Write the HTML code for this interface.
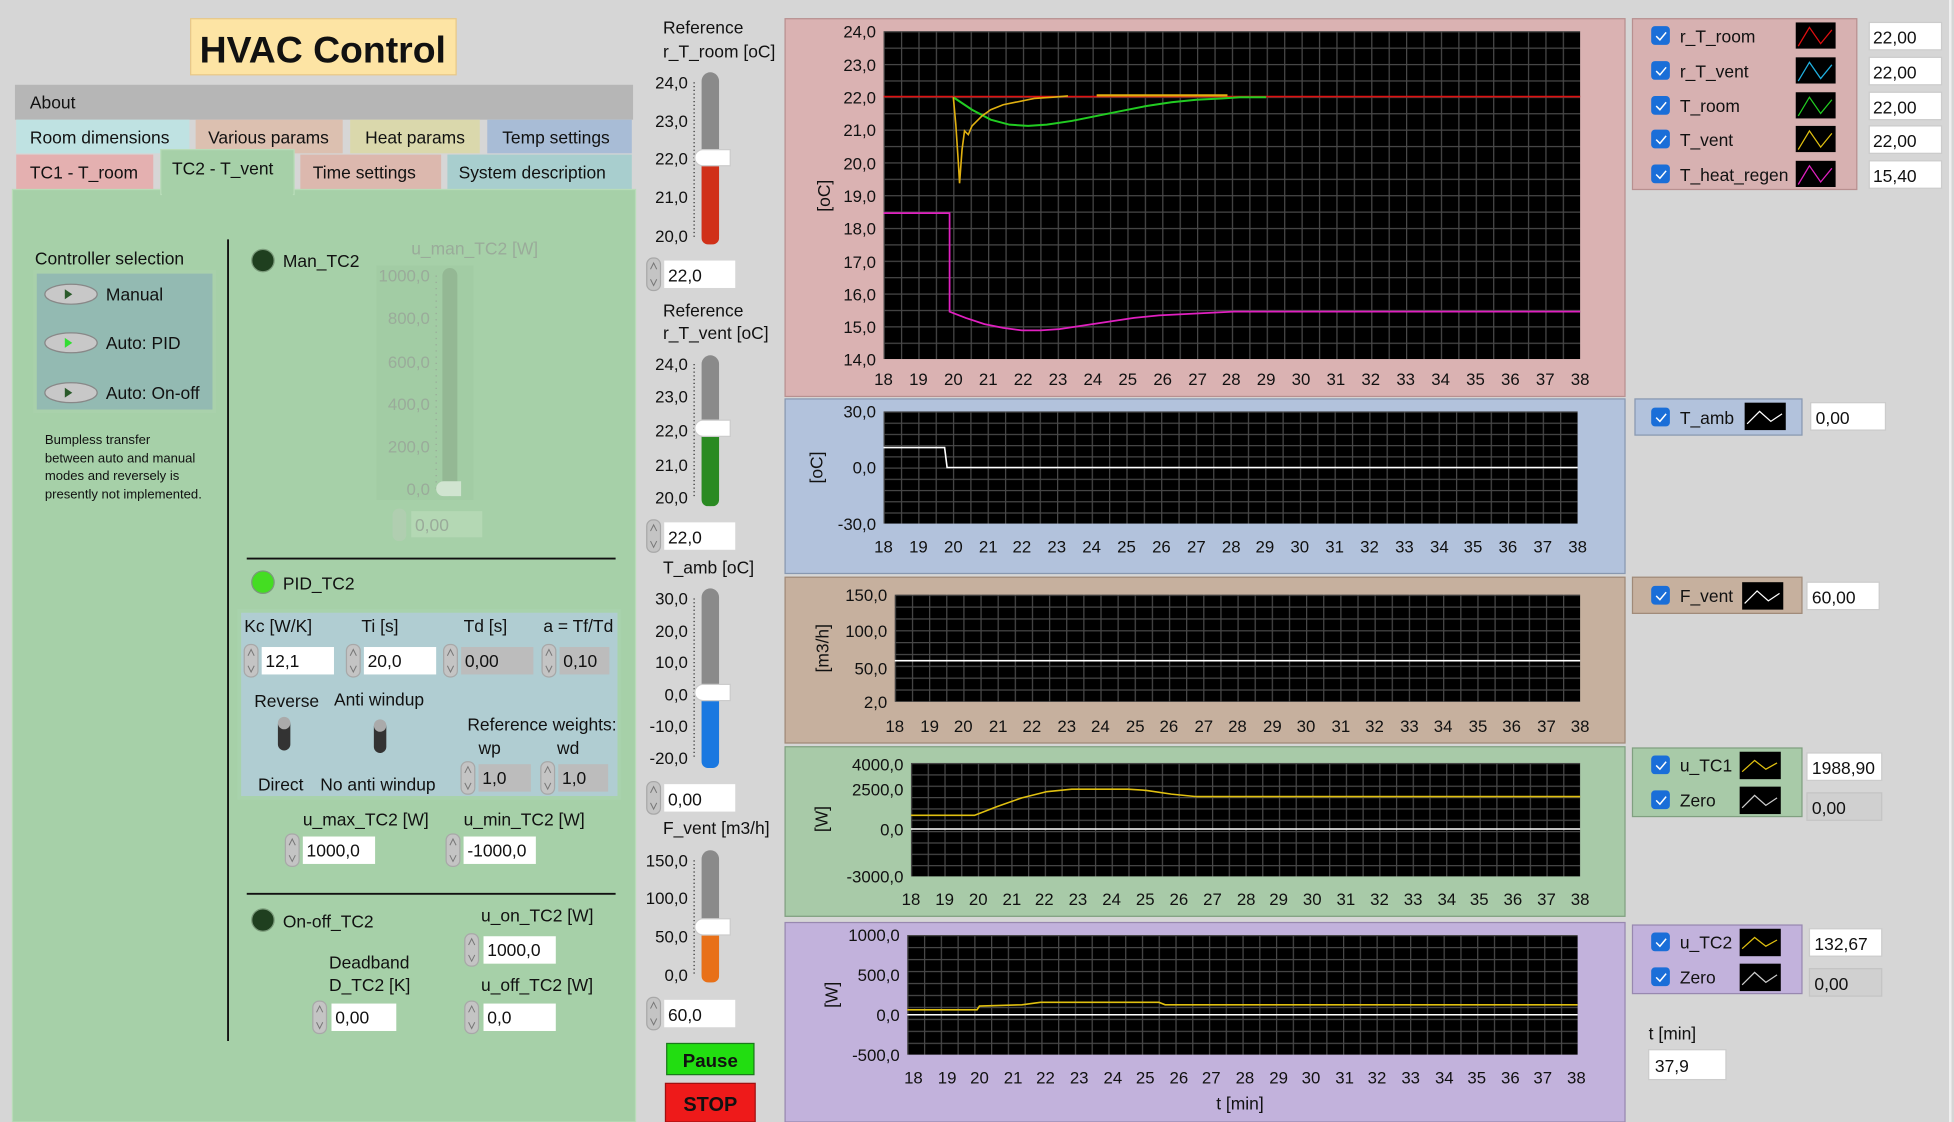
<!DOCTYPE html>
<html><head><meta charset="utf-8"><style>
html,body{margin:0;padding:0;background:#d6d6d6;width:1954px;height:1122px;overflow:hidden}
svg{display:block}
text{font-family:"Liberation Sans",sans-serif;font-size:14px;fill:#111}
.ax text{font-size:13.5px;text-anchor:middle}
.yl text{text-anchor:end;font-size:13.5px}
.gr{fill:#9aab9a}
</style></head><body>
<svg width="1954" height="1122" viewBox="0 0 1568 900" preserveAspectRatio="none" xmlns="http://www.w3.org/2000/svg">
<defs>
<pattern id="g1" x="709" y="25" width="13.975" height="13.15" patternUnits="userSpaceOnUse"><rect width="14" height="14" fill="#000"/><path d="M0.5 0V14M0 0.5H14" stroke="#484848" stroke-width="1"/></pattern>
<pattern id="g2" x="709" y="330" width="13.92" height="9" patternUnits="userSpaceOnUse"><rect width="14" height="14" fill="#000"/><path d="M0.5 0V14M0 0.5H14" stroke="#484848"/></pattern>
<pattern id="g3" x="718" y="477" width="13.75" height="9.5" patternUnits="userSpaceOnUse"><rect width="14" height="14" fill="#000"/><path d="M0.5 0V14M0 0.5H14" stroke="#484848"/></pattern>
<pattern id="g4" x="731" y="612" width="13.42" height="9.1" patternUnits="userSpaceOnUse"><rect width="14" height="14" fill="#000"/><path d="M0.5 0V14M0 0.5H14" stroke="#484848"/></pattern>
<pattern id="g5" x="728" y="750" width="13.45" height="9.6" patternUnits="userSpaceOnUse"><rect width="14" height="14" fill="#000"/><path d="M0.5 0V14M0 0.5H14" stroke="#484848"/></pattern>
<g id="arr"><rect x="0" y="0" width="11" height="26" rx="5" fill="#c4c4c4" stroke="#a8a8a8"/><path d="M3 9L5.5 4L8 9M3 17L5.5 22L8 17" stroke="#777" fill="none" stroke-width="0.8"/></g>
<g id="chk"><rect x="0" y="0" width="15" height="15" rx="3" fill="#1a6ed8"/><path d="M4 8l3 3l5-6" stroke="#fff" fill="none" stroke-width="1.2"/></g>
</defs>
<rect width="1568" height="900" fill="#d6d6d6"/>

<rect x="153" y="15" width="213" height="45" fill="#fde4a4" stroke="#e8c888"/>
<text x="259" y="50" text-anchor="middle" style="font-size:30px;font-weight:bold">HVAC Control</text>

<rect x="12" y="68" width="496" height="28" fill="#b6b6b6"/>
<text x="24" y="87">About</text>
<rect x="13" y="96" width="139" height="27" fill="#bfe2e2"/><text x="24" y="115">Room dimensions</text>
<rect x="157" y="96" width="118" height="27" fill="#dcc0b0"/><text x="167" y="115">Various params</text>
<rect x="281" y="96" width="104" height="27" fill="#dad8ac"/><text x="293" y="115">Heat params</text>
<rect x="391" y="96" width="116" height="27" fill="#a8bcd6"/><text x="403" y="115">Temp settings</text>
<rect x="13" y="124" width="110" height="30" fill="#e4b0b0"/><text x="24" y="143">TC1 - T_room</text>
<rect x="241" y="124" width="113" height="30" fill="#dcb8ae"/><text x="251" y="143">Time settings</text>
<rect x="359" y="124" width="148" height="30" fill="#a8cece"/><text x="368" y="143">System description</text>
<rect x="10" y="152" width="500" height="748" fill="#a6d0a8" stroke="#b8dcb8"/>
<rect x="129" y="120" width="107" height="36" fill="#a6d0a8" stroke="#b8dcb8"/><rect x="130" y="150" width="105" height="8" fill="#a6d0a8"/>
<text x="138" y="140">TC2 - T_vent</text>

<text x="28" y="212">Controller selection</text>
<rect x="28" y="218" width="144" height="112" fill="#93bab2" stroke="#a9d1ab" stroke-width="3"/>
<g><ellipse cx="57" cy="236" rx="21" ry="8" fill="#c8c8c8" stroke="#888"/><path d="M52 232L58 236L52 240Z" fill="#2a5a2a"/><text x="85" y="241">Manual</text></g>
<g><ellipse cx="57" cy="275" rx="21" ry="8" fill="#c8c8c8" stroke="#888"/><path d="M52 271L58 275L52 279Z" fill="#33dd33"/><text x="85" y="280">Auto: PID</text></g>
<g><ellipse cx="57" cy="315" rx="21" ry="8" fill="#c8c8c8" stroke="#888"/><path d="M52 311L58 315L52 319Z" fill="#2a5a2a"/><text x="85" y="320">Auto: On-off</text></g>
<g><text x="36" y="356" style="font-size:10.5px">Bumpless transfer</text><text x="36" y="371" style="font-size:10.5px">between auto and manual</text><text x="36" y="385" style="font-size:10.5px">modes and reversely is</text><text x="36" y="400" style="font-size:10.5px">presently not implemented.</text></g>
<line x1="183" y1="192" x2="183" y2="835" stroke="#111" stroke-width="1.5"/>

<circle cx="211" cy="209" r="9" fill="#1f3f1f" stroke="#7a9a7a"/>
<text x="227" y="214">Man_TC2</text>
<text x="330" y="204" class="gr">u_man_TC2 [W]</text>
<rect x="302" y="213" width="78" height="188" fill="#a2cca4"/>
<g class="yl"><text x="345" y="226" class="gr">1000,0</text><text x="345" y="260" class="gr">800,0</text><text x="345" y="295" class="gr">600,0</text><text x="345" y="329" class="gr">400,0</text><text x="345" y="363" class="gr">200,0</text><text x="345" y="397" class="gr">0,0</text></g>
<line x1="350" y1="221" x2="350" y2="392" stroke="#98a898" stroke-dasharray="1 4"/>
<rect x="355" y="215" width="12" height="183" rx="6" fill="#94b894"/>
<path d="M356 386h14v12h-14a6 6 0 0 1 0-12z" fill="#d0e4d0"/>
<rect x="315" y="408" width="11" height="26" rx="5" fill="#b0ceb0"/>
<rect x="330" y="410" width="57" height="21" fill="#b4d8b4"/><text x="333" y="426" class="gr">0,00</text>

<line x1="198" y1="448" x2="494" y2="448" stroke="#111" stroke-width="1.5"/>
<circle cx="211" cy="467" r="9" fill="#44dd22" stroke="#7a9a7a"/>
<text x="227" y="473">PID_TC2</text>

<rect x="192" y="490" width="305" height="150" fill="#b0cdd2" stroke="#a8d2ac" stroke-width="3"/>
<text x="196" y="507">Kc [W/K]</text><text x="290" y="507">Ti [s]</text><text x="372" y="507">Td [s]</text><text x="436" y="507">a = Tf/Td</text>
<use href="#arr" x="196" y="517"/><rect x="210" y="519" width="58" height="22" fill="#fff"/><text x="213" y="535">12,1</text>
<use href="#arr" x="278" y="517"/><rect x="292" y="519" width="58" height="22" fill="#fff"/><text x="295" y="535">20,0</text>
<use href="#arr" x="356" y="517"/><rect x="370" y="519" width="58" height="22" fill="#bcbcbc"/><text x="373" y="535">0,00</text>
<use href="#arr" x="435" y="517"/><rect x="449" y="519" width="40" height="22" fill="#bcbcbc"/><text x="452" y="535">0,10</text>
<text x="204" y="567">Reverse</text><text x="268" y="566">Anti windup</text>
<rect x="223" y="576" width="10" height="26" rx="5" fill="#333"/><circle cx="228" cy="580" r="5" fill="#aaa"/>
<rect x="300" y="578" width="10" height="26" rx="5" fill="#333"/><circle cx="305" cy="582" r="5" fill="#aaa"/>
<text x="207" y="634">Direct</text><text x="257" y="634">No anti windup</text>
<text x="375" y="586">Reference weights:</text><text x="384" y="605">wp</text><text x="447" y="605">wd</text>
<use href="#arr" x="370" y="611"/><rect x="384" y="613" width="42" height="22" fill="#bcbcbc"/><text x="387" y="629">1,0</text>
<use href="#arr" x="434" y="611"/><rect x="448" y="613" width="40" height="22" fill="#bcbcbc"/><text x="451" y="629">1,0</text>

<text x="243" y="662">u_max_TC2 [W]</text><text x="372" y="662">u_min_TC2 [W]</text>
<use href="#arr" x="229" y="669"/><rect x="243" y="671" width="58" height="22" fill="#fff"/><text x="246" y="687">1000,0</text>
<use href="#arr" x="358" y="669"/><rect x="372" y="671" width="58" height="22" fill="#fff"/><text x="375" y="687">-1000,0</text>

<line x1="198" y1="717" x2="494" y2="717" stroke="#111" stroke-width="1.5"/>
<circle cx="211" cy="738" r="9" fill="#1f3f1f" stroke="#7a9a7a"/>
<text x="227" y="744">On-off_TC2</text>
<text x="386" y="739">u_on_TC2 [W]</text>
<use href="#arr" x="373" y="749"/><rect x="388" y="751" width="58" height="22" fill="#fff"/><text x="391" y="767">1000,0</text>
<text x="264" y="777">Deadband</text><text x="264" y="795">D_TC2 [K]</text><text x="386" y="795">u_off_TC2 [W]</text>
<use href="#arr" x="251" y="803"/><rect x="266" y="805" width="52" height="22" fill="#fff"/><text x="269" y="821">0,00</text>
<use href="#arr" x="373" y="803"/><rect x="388" y="805" width="58" height="22" fill="#fff"/><text x="391" y="821">0,0</text>

<text x="532" y="27">Reference</text><text x="532" y="46">r_T_room [oC]</text>
<g class="yl"><text x="552" y="71">24,0</text><text x="552" y="102">23,0</text><text x="552" y="132">22,0</text><text x="552" y="163">21,0</text><text x="552" y="194">20,0</text></g>
<line x1="557" y1="66" x2="557" y2="190" stroke="#333" stroke-dasharray="1 2"/>
<rect x="563" y="58" width="14" height="138" rx="7" fill="#8a8a8a"/><rect x="563" y="127" width="14" height="69" rx="5" fill="#d03018"/>
<path d="M564 120h22v13h-22a6 6 0 0 1 0-13z" fill="#fff" stroke="#ccc"/>
<use href="#arr" x="519" y="207"/><rect x="533" y="209" width="57" height="22" fill="#fff"/><text x="536" y="226">22,0</text>

<text x="532" y="254">Reference</text><text x="532" y="272">r_T_vent [oC]</text>
<g class="yl"><text x="552" y="297">24,0</text><text x="552" y="323">23,0</text><text x="552" y="350">22,0</text><text x="552" y="378">21,0</text><text x="552" y="404">20,0</text></g>
<line x1="557" y1="292" x2="557" y2="400" stroke="#333" stroke-dasharray="1 2"/>
<rect x="563" y="285" width="14" height="121" rx="7" fill="#8a8a8a"/><rect x="563" y="344" width="14" height="62" rx="5" fill="#2a8a22"/>
<path d="M564 337h22v13h-22a6 6 0 0 1 0-13z" fill="#fff" stroke="#ccc"/>
<use href="#arr" x="519" y="417"/><rect x="533" y="419" width="57" height="22" fill="#fff"/><text x="536" y="436">22,0</text>

<text x="532" y="460">T_amb [oC]</text>
<g class="yl"><text x="552" y="485">30,0</text><text x="552" y="511">20,0</text><text x="552" y="536">10,0</text><text x="552" y="562">0,0</text><text x="552" y="587">-10,0</text><text x="552" y="613">-20,0</text></g>
<line x1="557" y1="480" x2="557" y2="609" stroke="#333" stroke-dasharray="1 2"/>
<rect x="563" y="472" width="14" height="144" rx="7" fill="#8a8a8a"/><rect x="563" y="556" width="14" height="60" rx="5" fill="#1a78e0"/>
<path d="M564 549h22v13h-22a6 6 0 0 1 0-13z" fill="#fff" stroke="#ccc"/>
<use href="#arr" x="519" y="627"/><rect x="533" y="629" width="57" height="22" fill="#fff"/><text x="536" y="646">0,00</text>

<text x="532" y="669">F_vent [m3/h]</text>
<g class="yl"><text x="552" y="695">150,0</text><text x="552" y="725">100,0</text><text x="552" y="756">50,0</text><text x="552" y="787">0,0</text></g>
<line x1="557" y1="690" x2="557" y2="782" stroke="#333" stroke-dasharray="1 2"/>
<rect x="563" y="682" width="14" height="106" rx="7" fill="#8a8a8a"/><rect x="563" y="743" width="14" height="45" rx="5" fill="#e87018"/>
<path d="M564 737h22v13h-22a6 6 0 0 1 0-13z" fill="#fff" stroke="#ccc"/>
<use href="#arr" x="519" y="800"/><rect x="533" y="802" width="57" height="22" fill="#fff"/><text x="536" y="819">60,0</text>

<rect x="535" y="837" width="70" height="25" fill="#22dd11" stroke="#1a7a1a"/><text x="570" y="856" text-anchor="middle" style="font-weight:bold;font-size:15px">Pause</text>
<rect x="534" y="869" width="72" height="31" fill="#ee1a1a" stroke="#a01010"/><text x="570" y="891" text-anchor="middle" style="font-weight:bold;font-size:16px">STOP</text>

<rect x="630" y="15" width="674" height="303" fill="#dab2b2" stroke="#b89090"/>
<rect x="709" y="25" width="559" height="263" fill="url(#g1)"/>
<g class="yl"><text x="703" y="30">24,0</text><text x="703" y="57">23,0</text><text x="703" y="83">22,0</text><text x="703" y="109">21,0</text><text x="703" y="136">20,0</text><text x="703" y="162">19,0</text><text x="703" y="188">18,0</text><text x="703" y="215">17,0</text><text x="703" y="241">16,0</text><text x="703" y="267">15,0</text><text x="703" y="293">14,0</text></g>
<text transform="translate(666,157) rotate(-90)" text-anchor="middle">[oC]</text>
<g class="ax"><text x="709" y="309">18</text><text x="737" y="309">19</text><text x="765" y="309">20</text><text x="793" y="309">21</text><text x="821" y="309">22</text><text x="849" y="309">23</text><text x="877" y="309">24</text><text x="905" y="309">25</text><text x="933" y="309">26</text><text x="961" y="309">27</text><text x="988" y="309">28</text><text x="1016" y="309">29</text><text x="1044" y="309">30</text><text x="1072" y="309">31</text><text x="1100" y="309">32</text><text x="1128" y="309">33</text><text x="1156" y="309">34</text><text x="1184" y="309">35</text><text x="1212" y="309">36</text><text x="1240" y="309">37</text><text x="1268" y="309">38</text></g>
<line x1="709" y1="77.5" x2="1268" y2="77.5" stroke="#e01010" stroke-width="1.3"/>
<polyline fill="none" stroke="#22cc22" stroke-width="1.6" points="765,78 780,88 795,96 810,100 825,101 840,100 860,97 880,93 900,89 920,85 940,82 960,80 980,79 995,78 1016,78"/>
<polyline fill="none" stroke="#e0b010" stroke-width="1.3" points="765,78 767,100 769,130 770,147 772,120 774,105 777,108 780,101 783,98 788,93 795,88 805,84 815,82 830,79 845,78 857,77"/>
<polyline fill="none" stroke="#e0b010" stroke-width="1.8" points="880,76.5 985,76.5"/>
<polyline fill="none" stroke="#e020c0" stroke-width="1.4" points="709,171 762,171 762,250 775,255 790,260 805,263 820,265 835,265 850,264 870,261 890,258 910,255 930,253 950,252 970,251 990,250 1268,250"/>
<rect x="1310" y="15" width="180" height="137" fill="#d7b1b1" stroke="#b89090"/>
<g>
<use href="#chk" x="1325" y="21"/><text x="1348" y="34">r_T_room</text><rect x="1441" y="18" width="32" height="21" fill="#000"/><path d="M1443 37l9-15 9 13 9-11" stroke="#e01010" fill="none"/>
<use href="#chk" x="1325" y="49"/><text x="1348" y="62">r_T_vent</text><rect x="1441" y="46" width="32" height="21" fill="#000"/><path d="M1443 65l9-15 9 13 9-11" stroke="#20b0e0" fill="none"/>
<use href="#chk" x="1325" y="77"/><text x="1348" y="90">T_room</text><rect x="1441" y="74" width="32" height="21" fill="#000"/><path d="M1443 93l9-15 9 13 9-11" stroke="#22cc22" fill="none"/>
<use href="#chk" x="1325" y="104"/><text x="1348" y="117">T_vent</text><rect x="1441" y="101" width="32" height="21" fill="#000"/><path d="M1443 120l9-15 9 13 9-11" stroke="#e0c010" fill="none"/>
<use href="#chk" x="1325" y="132"/><text x="1348" y="145">T_heat_regen</text><rect x="1441" y="129" width="32" height="21" fill="#000"/><path d="M1443 148l9-15 9 13 9-11" stroke="#e020c0" fill="none"/>
</g>
<g><rect x="1500" y="18" width="58" height="22" fill="#fff" stroke="#ccc"/><text x="1503" y="35">22,00</text>
<rect x="1500" y="46" width="58" height="22" fill="#fff" stroke="#ccc"/><text x="1503" y="63">22,00</text>
<rect x="1500" y="74" width="58" height="22" fill="#fff" stroke="#ccc"/><text x="1503" y="91">22,00</text>
<rect x="1500" y="101" width="58" height="22" fill="#fff" stroke="#ccc"/><text x="1503" y="118">22,00</text>
<rect x="1500" y="129" width="58" height="22" fill="#fff" stroke="#ccc"/><text x="1503" y="146">15,40</text></g>

<rect x="630" y="320" width="674" height="140" fill="#b2c2dc" stroke="#8898b0"/>
<rect x="709" y="330" width="557" height="90" fill="url(#g2)"/>
<g class="yl"><text x="703" y="335">30,0</text><text x="703" y="380">0,0</text><text x="703" y="425">-30,0</text></g>
<text transform="translate(660,375) rotate(-90)" text-anchor="middle">[oC]</text>
<g class="ax"><text x="709" y="443">18</text><text x="737" y="443">19</text><text x="765" y="443">20</text><text x="793" y="443">21</text><text x="820" y="443">22</text><text x="848" y="443">23</text><text x="876" y="443">24</text><text x="904" y="443">25</text><text x="932" y="443">26</text><text x="960" y="443">27</text><text x="988" y="443">28</text><text x="1015" y="443">29</text><text x="1043" y="443">30</text><text x="1071" y="443">31</text><text x="1099" y="443">32</text><text x="1127" y="443">33</text><text x="1155" y="443">34</text><text x="1182" y="443">35</text><text x="1210" y="443">36</text><text x="1238" y="443">37</text><text x="1266" y="443">38</text></g>
<polyline fill="none" stroke="#fff" stroke-width="1.3" points="709,359 758,359 760,375 1266,375"/>
<rect x="1312" y="320" width="134" height="29" fill="#b2c2dc" stroke="#8898b0"/>
<use href="#chk" x="1325" y="327"/><text x="1348" y="340">T_amb</text><rect x="1400" y="323" width="33" height="22" fill="#000"/><path d="M1402 340l10-10 9 8 9-6" stroke="#fff" fill="none"/>
<rect x="1453" y="323" width="60" height="22" fill="#fff" stroke="#ccc"/><text x="1457" y="340">0,00</text>

<rect x="630" y="463" width="674" height="133" fill="#c6b09e" stroke="#a08a78"/>
<rect x="718" y="477" width="550" height="86" fill="url(#g3)"/>
<g class="yl"><text x="712" y="482">150,0</text><text x="712" y="511">100,0</text><text x="712" y="541">50,0</text><text x="712" y="568">2,0</text></g>
<text transform="translate(665,520) rotate(-90)" text-anchor="middle">[m3/h]</text>
<g class="ax"><text x="718" y="587">18</text><text x="746" y="587">19</text><text x="773" y="587">20</text><text x="801" y="587">21</text><text x="828" y="587">22</text><text x="856" y="587">23</text><text x="883" y="587">24</text><text x="911" y="587">25</text><text x="938" y="587">26</text><text x="966" y="587">27</text><text x="993" y="587">28</text><text x="1021" y="587">29</text><text x="1048" y="587">30</text><text x="1076" y="587">31</text><text x="1103" y="587">32</text><text x="1131" y="587">33</text><text x="1158" y="587">34</text><text x="1186" y="587">35</text><text x="1213" y="587">36</text><text x="1241" y="587">37</text><text x="1268" y="587">38</text></g>
<line x1="718" y1="530" x2="1268" y2="530" stroke="#fff" stroke-width="1.3"/>
<rect x="1310" y="463" width="136" height="29" fill="#c6b09e" stroke="#a08a78"/>
<use href="#chk" x="1325" y="470"/><text x="1348" y="483">F_vent</text><rect x="1398" y="467" width="33" height="22" fill="#000"/><path d="M1400 484l10-10 9 8 9-6" stroke="#fff" fill="none"/>
<rect x="1450" y="467" width="58" height="22" fill="#fff" stroke="#ccc"/><text x="1454" y="484">60,00</text>

<rect x="630" y="599" width="674" height="136" fill="#a8caa8" stroke="#80a080"/>
<rect x="731" y="612" width="537" height="91" fill="url(#g4)"/>
<g class="yl"><text x="725" y="618">4000,0</text><text x="725" y="638">2500,0</text><text x="725" y="670">0,0</text><text x="725" y="708">-3000,0</text></g>
<text transform="translate(664,657) rotate(-90)" text-anchor="middle">[W]</text>
<g class="ax"><text x="731" y="726">18</text><text x="758" y="726">19</text><text x="785" y="726">20</text><text x="812" y="726">21</text><text x="838" y="726">22</text><text x="865" y="726">23</text><text x="892" y="726">24</text><text x="919" y="726">25</text><text x="946" y="726">26</text><text x="973" y="726">27</text><text x="1000" y="726">28</text><text x="1026" y="726">29</text><text x="1053" y="726">30</text><text x="1080" y="726">31</text><text x="1107" y="726">32</text><text x="1134" y="726">33</text><text x="1161" y="726">34</text><text x="1187" y="726">35</text><text x="1214" y="726">36</text><text x="1241" y="726">37</text><text x="1268" y="726">38</text></g>
<line x1="731" y1="665" x2="1268" y2="665" stroke="#fff" stroke-width="1.2"/>
<polyline fill="none" stroke="#e0c010" stroke-width="1.3" points="731,654 782,654 800,647 820,640 840,635 860,633 905,633 920,634 940,637 960,639 1268,639"/>
<rect x="1310" y="600" width="136" height="55" fill="#a8caa8" stroke="#80a080"/>
<use href="#chk" x="1325" y="606"/><text x="1348" y="619">u_TC1</text><rect x="1396" y="603" width="33" height="22" fill="#000"/><path d="M1398 619l10-9 9 7 9-5" stroke="#e0c010" fill="none"/>
<use href="#chk" x="1325" y="634"/><text x="1348" y="647">Zero</text><rect x="1396" y="631" width="33" height="22" fill="#000"/><path d="M1398 648l10-10 9 8 9-6" stroke="#ccc" fill="none"/>
<rect x="1450" y="604" width="60" height="22" fill="#fff" stroke="#ccc"/><text x="1454" y="621">1988,90</text>
<rect x="1450" y="636" width="60" height="22" fill="#d0d0d0" stroke="#c4c4c4"/><text x="1454" y="653">0,00</text>

<rect x="630" y="740" width="674" height="160" fill="#c2b2dc" stroke="#9888b0"/>
<rect x="728" y="750" width="538" height="96" fill="url(#g5)"/>
<g class="yl"><text x="722" y="755">1000,0</text><text x="722" y="787">500,0</text><text x="722" y="819">0,0</text><text x="722" y="851">-500,0</text></g>
<text transform="translate(672,798) rotate(-90)" text-anchor="middle">[W]</text>
<g class="ax"><text x="733" y="869">18</text><text x="760" y="869">19</text><text x="786" y="869">20</text><text x="813" y="869">21</text><text x="839" y="869">22</text><text x="866" y="869">23</text><text x="893" y="869">24</text><text x="919" y="869">25</text><text x="946" y="869">26</text><text x="972" y="869">27</text><text x="999" y="869">28</text><text x="1026" y="869">29</text><text x="1052" y="869">30</text><text x="1079" y="869">31</text><text x="1105" y="869">32</text><text x="1132" y="869">33</text><text x="1159" y="869">34</text><text x="1185" y="869">35</text><text x="1212" y="869">36</text><text x="1238" y="869">37</text><text x="1265" y="869">38</text></g>
<text x="995" y="890" text-anchor="middle">t [min]</text>
<line x1="728" y1="814" x2="1266" y2="814" stroke="#fff" stroke-width="1.2"/>
<polyline fill="none" stroke="#e0c010" stroke-width="1.3" points="728,810 784,810 786,807 820,806 835,804 930,804 935,806 1266,806"/>
<rect x="1310" y="742" width="136" height="55" fill="#c2b2dc" stroke="#9888b0"/>
<use href="#chk" x="1325" y="748"/><text x="1348" y="761">u_TC2</text><rect x="1396" y="745" width="33" height="22" fill="#000"/><path d="M1398 761l10-9 9 7 9-5" stroke="#e0c010" fill="none"/>
<use href="#chk" x="1325" y="776"/><text x="1348" y="789">Zero</text><rect x="1396" y="773" width="33" height="22" fill="#000"/><path d="M1398 790l10-10 9 8 9-6" stroke="#ccc" fill="none"/>
<rect x="1452" y="745" width="58" height="22" fill="#fff" stroke="#ccc"/><text x="1456" y="762">132,67</text>
<rect x="1452" y="777" width="58" height="22" fill="#d0d0d0" stroke="#c4c4c4"/><text x="1456" y="794">0,00</text>

<text x="1323" y="834">t [min]</text>
<rect x="1323" y="842" width="62" height="24" fill="#fff" stroke="#ccc"/><text x="1328" y="860">37,9</text>
<line x1="1565" y1="0" x2="1565" y2="900" stroke="#f0f0f0" stroke-width="2"/>
</svg>
</body></html>
